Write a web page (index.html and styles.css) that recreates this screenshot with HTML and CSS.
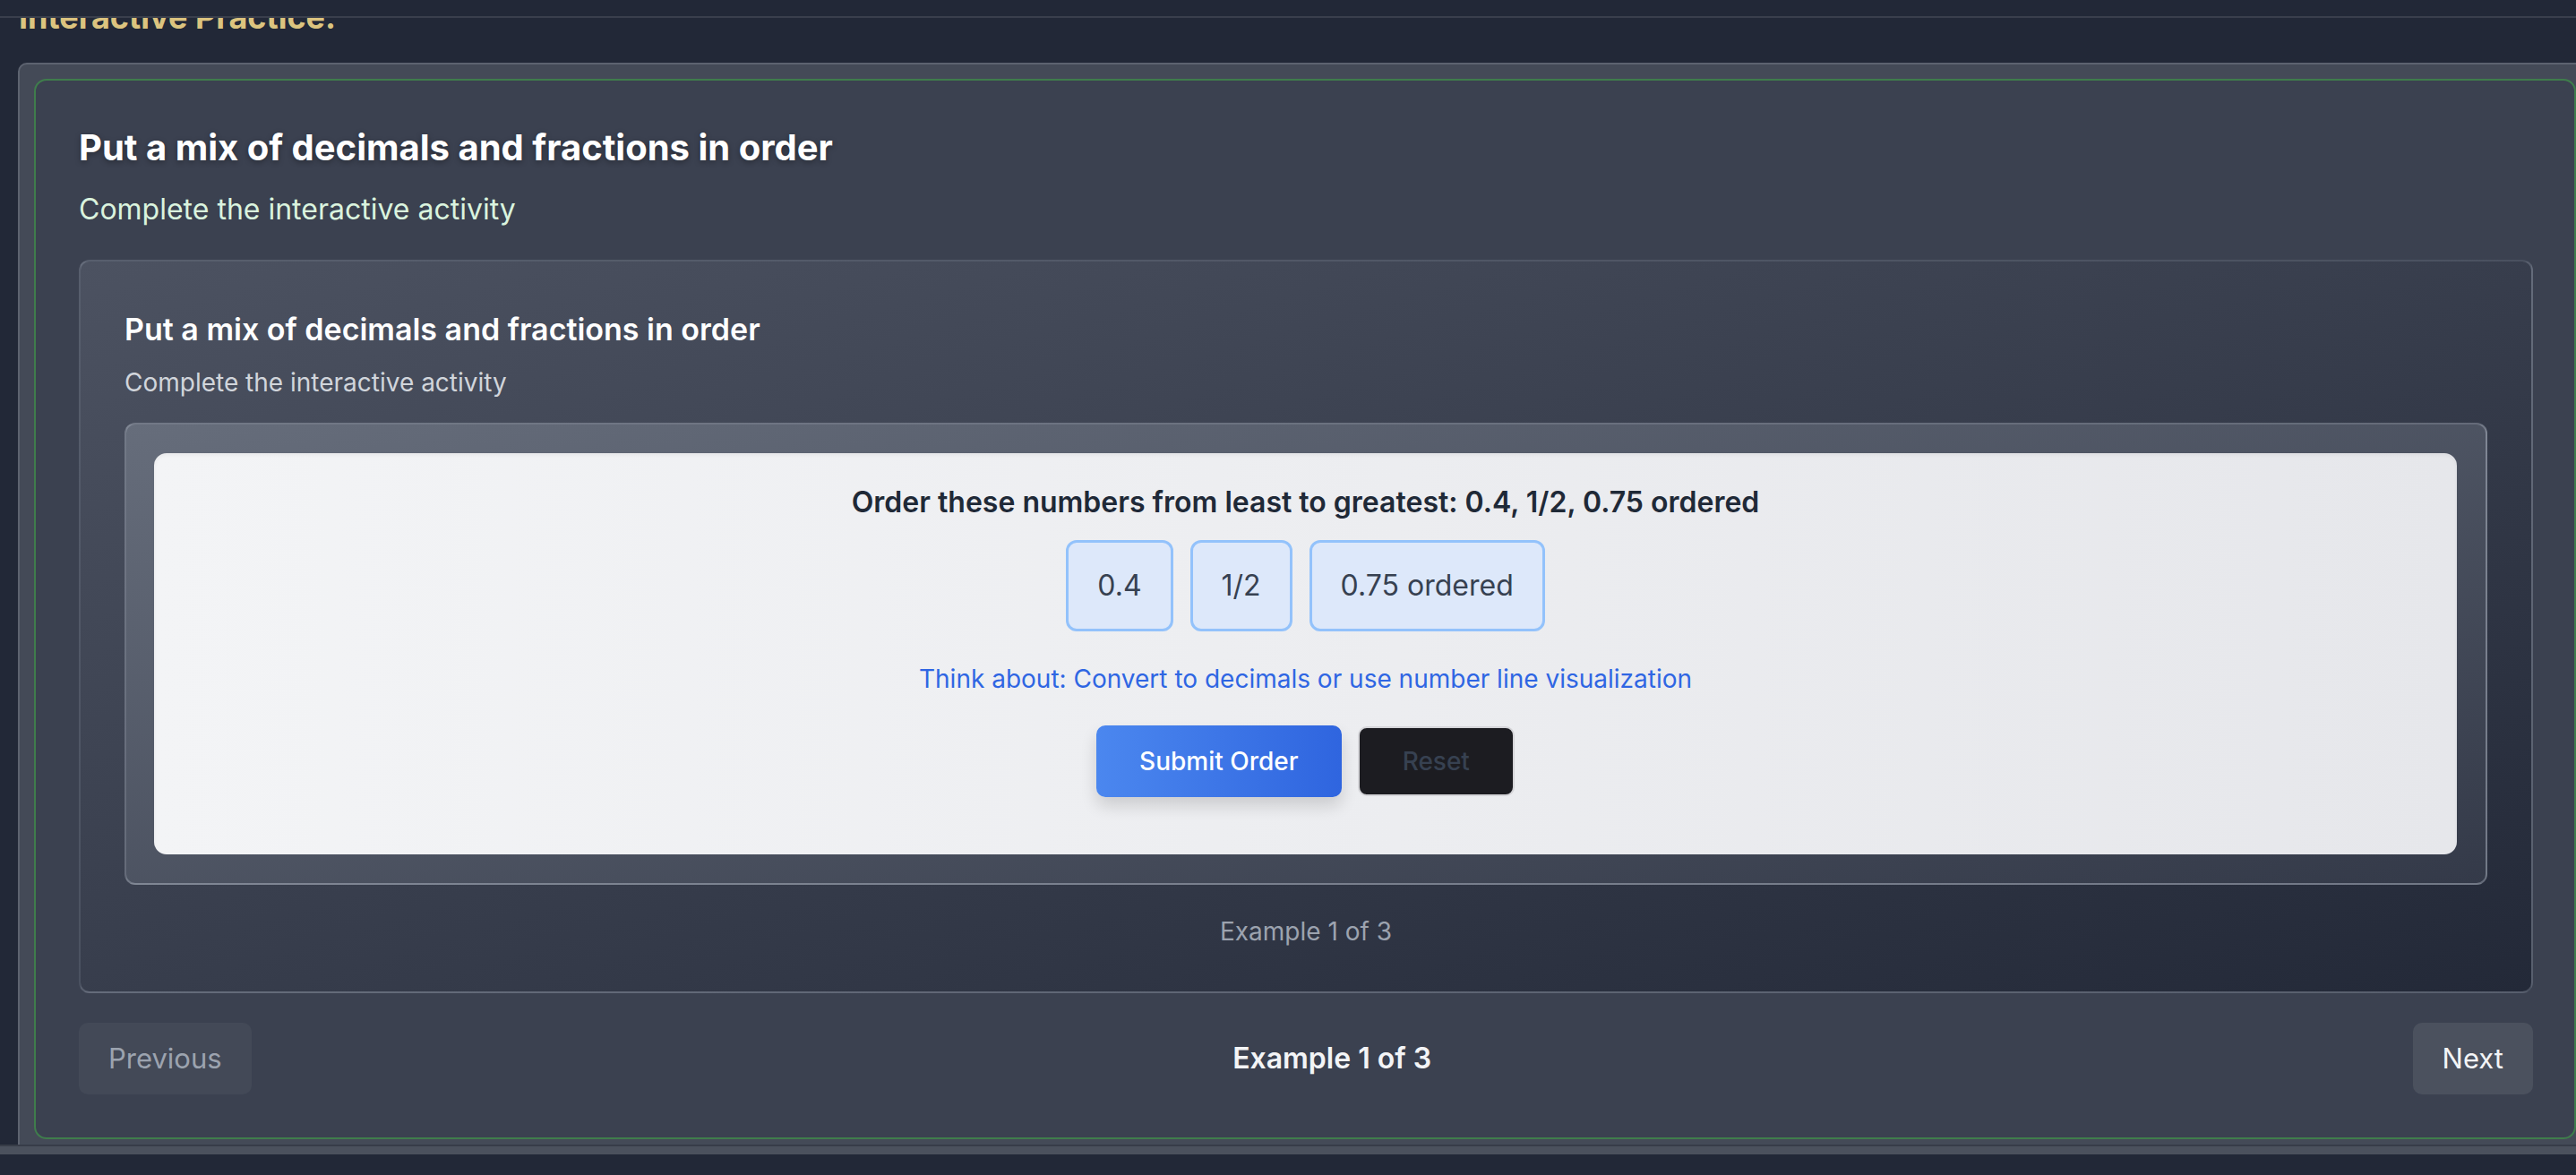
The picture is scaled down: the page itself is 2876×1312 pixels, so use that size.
FILE: index.html
```html
<!DOCTYPE html>
<html lang="en">
<head>
<meta charset="utf-8">
<title>Interactive Practice</title>
<link rel="stylesheet" href="styles.css">
</head>
<body>
<div class="topbar"></div>
<div class="viewport">
  <h2 class="section-heading">Interactive Practice:</h2>
  <div class="outer-card">
    <div class="lesson-card">
      <h1 class="lesson-title">Put a mix of decimals and fractions in order</h1>
      <p class="lesson-subtitle">Complete the interactive activity</p>
      <div class="example-card">
        <h3 class="example-title">Put a mix of decimals and fractions in order</h3>
        <p class="example-subtitle">Complete the interactive activity</p>
        <div class="activity-frame">
          <div class="activity">
            <p class="question">Order these numbers from least to greatest: 0.4, 1/2, 0.75 ordered</p>
            <div class="chips">
              <span class="chip">0.4</span>
              <span class="chip">1/2</span>
              <span class="chip">0.75 ordered</span>
            </div>
            <p class="hint">Think about: Convert to decimals or use number line visualization</p>
            <div class="actions">
              <button class="btn btn-submit">Submit Order</button>
              <button class="btn btn-reset">Reset</button>
            </div>
          </div>
        </div>
        <p class="counter">Example 1 of 3</p>
      </div>
      <div class="nav">
        <button class="nav-btn nav-prev">Previous</button>
        <span class="nav-count">Example 1 of 3</span>
        <button class="nav-btn nav-next">Next</button>
      </div>
    </div>
  </div>
</div>
<div class="hscroll"></div>
</body>
</html>
```
FILE: styles.css
```css
* { box-sizing: border-box; }
html, body {
  margin: 0;
  padding: 0;
  background: #222837;
  font-family: Inter, "Noto Sans", sans-serif;
  overflow: hidden;
}
.topbar {
  height: 20px;
  border-bottom: 2px solid #3a3f4c;
  background: #222837;
}
.viewport {
  height: 1260px;
  overflow: hidden;
  border-bottom: 2px solid #373c48;
}
.section-heading {
  margin: -21px 0 0 0;
  padding-left: 21px;
  font-size: 36px;
  line-height: 40px;
  font-weight: 700;
  color: #dcc47f;
}
.outer-card {
  margin-top: 31px;
  margin-left: 20px;
  width: 2874px;
  background: #444a57;
  border: 2px solid #5d6370;
  border-radius: 10px;
  padding: 16px;
  padding-bottom: 40px;
}
.lesson-card {
  border: 2px solid #3f7d4c;
  border-radius: 14px;
  background: #3b4150;
  padding: 53px 46px 48px 48px;
}
.lesson-title {
  margin: 0;
  font-size: 40px;
  line-height: 44px;
  font-weight: 700;
  color: #ffffff;
  text-shadow: 0 2px 6px rgba(0,0,0,0.35);
}
.lesson-subtitle {
  margin: 27px 0 0 0;
  font-size: 32px;
  line-height: 40px;
  color: #daf3de;
}
.example-card {
  margin-top: 36px;
  border: 2px solid rgba(150,158,172,0.35);
  border-radius: 12px;
  background: linear-gradient(to bottom right, #4c5261, #232938);
  padding: 56px 49px 49px 49px;
}
.example-title {
  margin: 0;
  font-size: 34px;
  line-height: 40px;
  font-weight: 600;
  color: #ffffff;
}
.example-subtitle {
  margin: 21px 0 0 0;
  font-size: 28px;
  line-height: 36px;
  color: #d1d5db;
}
.activity-frame {
  margin-top: 27px;
  border: 2px solid rgba(160,166,180,0.45);
  border-radius: 12px;
  background: linear-gradient(to bottom right, #666d7b, #343a49);
  padding: 32px 32px 32px 31px;
}
.activity {
  background: linear-gradient(to right, #f3f4f6, #e6e7eb);
  border-radius: 14px;
  padding: 35px 32px 64px 32px;
  display: flex;
  flex-direction: column;
  align-items: center;
  box-shadow: inset 0 2px 4px rgba(0,0,0,0.05);
}
.question {
  margin: 0;
  font-size: 32px;
  line-height: 40px;
  font-weight: 600;
  color: #1f2937;
}
.chips {
  margin-top: 22px;
  display: flex;
  gap: 19px;
}
.chip {
  display: block;
  border: 3px solid #93c2fb;
  background: #dde8fa;
  border-radius: 12px;
  padding: 28px 32px;
  font-size: 32px;
  line-height: 40px;
  color: #374151;
}
.hint {
  margin: 35px 0 0 0;
  font-size: 28px;
  line-height: 36px;
  color: #2f66e3;
}
.actions {
  margin-top: 34px;
  display: flex;
  gap: 18px;
  align-items: center;
}
.btn {
  font-family: inherit;
  font-size: 28px;
  line-height: 36px;
  border-radius: 10px;
  height: 80px;
  cursor: pointer;
}
.btn-submit {
  border: none;
  padding: 0 48px;
  color: #ffffff;
  font-weight: 500;
  background: linear-gradient(to right, #4b87ef, #2f65df);
  box-shadow: 0 10px 18px rgba(0,0,0,0.14);
}
.btn-reset {
  height: 78px;
  padding: 0 48px;
  background: #1c1c21;
  border: 2px solid #d4d4d8;
  color: #374151;
  font-weight: 500;
}
.counter {
  margin: 34px 0 0 0;
  text-align: center;
  font-size: 28px;
  line-height: 36px;
  color: #9ca3af;
}
.nav {
  margin-top: 33px;
  display: flex;
  justify-content: space-between;
  align-items: center;
}
.nav-btn {
  font-family: inherit;
  height: 80px;
  padding: 0 33px;
  border: none;
  border-radius: 10px;
  font-size: 31px;
  line-height: 36px;
}
.nav-prev {
  background: #434957;
  color: #9ca3af;
}
.nav-next {
  background: #4b515e;
  color: #f3f4f6;
}
.nav-count {
  font-size: 32px;
  line-height: 36px;
  font-weight: 600;
  color: #f3f4f6;
}
.hscroll {
  height: 9px;
  background: #4b515d;
}
```
